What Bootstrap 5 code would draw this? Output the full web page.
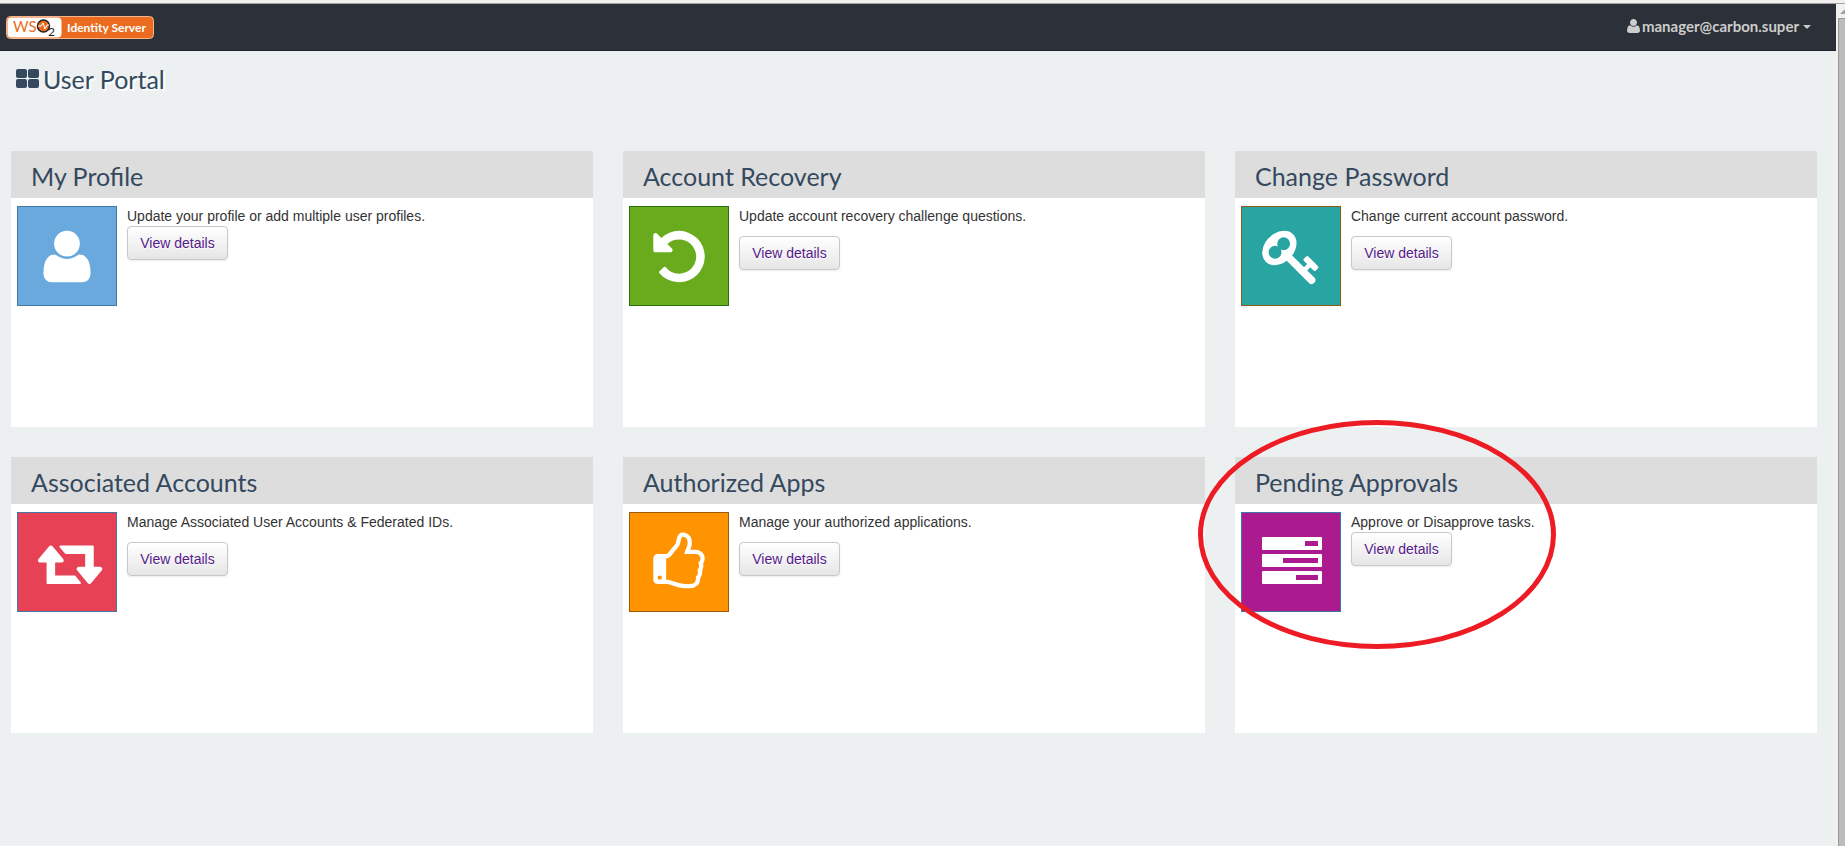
<!DOCTYPE html>
<html lang="en">
<head>
<meta charset="utf-8">
<meta name="viewport" content="width=device-width, initial-scale=1">
<title>WSO2 Identity Server - User Portal</title>
<link href="https://cdn.jsdelivr.net/npm/bootstrap@5.3.0/dist/css/bootstrap.min.css" rel="stylesheet">
<style>
  body { background: #ecf0f1; color: #333; font: 14px/20px "Liberation Sans", Arial, sans-serif; }
  .window-edge { height: 4px; background: #f2f0ee; border-bottom: 1px solid #a5a2a0; }
  .topbar { height: 47px; padding: 0 25px 0 6px; background: #2c3038; border-bottom: 1px solid #202428; }
  .logo { width: 148px; height: 23px; }
  .user-menu { --bs-btn-color: #ccc; --bs-btn-hover-color: #fff; --bs-btn-active-color: #fff; --bs-btn-padding-x: 0; --bs-btn-padding-y: 0; --bs-btn-border-width: 0;
    font: bold 15px/20px Lato, sans-serif; margin-bottom: 3px; }
  .user-menu svg { width: 13px; height: 14px; margin-right: 2px; }
  .user-menu::after { margin: 2px 0 0 4px; border-width: 4px 4px 0; }
  .portal { padding: 0 19px 30px 11px; }
  .portal-title { margin: 0; padding: 12px 0 0 5px; height: 100px; gap: 4px; font: 25px/32px Lato, sans-serif; color: #34495e; text-shadow: 2px 2px 1px #fff; }
  .portal-title svg { width: 23px; height: 20px; margin-top: 6px; }
  .tiles { --bs-gutter-x: 30px; --bs-gutter-y: 30px; }
  .panel { min-height: 276px; background: #fff; position: relative; }
  .panel-title { margin: 0; padding: 9px 20px 6px; font: 25px/32px Lato, sans-serif; color: #34495e; background: #ddd; }
  .panel-body { padding: 8px 6px; gap: 10px; }
  .details-gap { margin-bottom: 10px; }
  .tile { width: 100px; height: 100px; border: 1px solid #4178a4; color: #fff; }
  .blue { background: #6aa9dd; }
  .green { background: #6aab1e; border-color: #2b700f; }
  .teal { background: #28a5a3; border-color: #8f5a0c; }
  .red { background: #e64155; }
  .orange { background: #ff9400; border-color: #985b0c; }
  .purple { background: #ab1a8f; }
  .btn-details { --bs-btn-font-size: 14px; --bs-btn-line-height: 20px; --bs-btn-padding-x: 12px; --bs-btn-padding-y: 6px; --bs-btn-color: #551a8b; --bs-btn-hover-color: #551a8b; --bs-btn-border-radius: 4px;
    min-width: 101px; border-color: #c8c8c8; background: linear-gradient(#fff, #e6e6e6); text-shadow: 0 1px 1px #fff; box-shadow: 0 1px 2px rgba(0,0,0,.08); }
  .highlight { position: absolute; left: -37px; top: -37px; width: 358px; height: 229px; pointer-events: none; z-index: 2; }
  .scroll-rail { width: 9px; padding-left: 2px; background: #f2f1f0; }
  .scroll-rail svg { width: 7px; height: 14px; }
  .scroll-thumb { background: #bcbcbb; border-left: 1px solid #989796; border-top: 1px solid #989796; }
</style>
</head>
<body>
<div class="d-flex flex-column min-vh-100">
  <div class="window-edge"></div>
  <div class="d-flex flex-grow-1">
    <div class="flex-grow-1">
      <header class="topbar d-flex align-items-center justify-content-between">
        <a href="#" aria-label="WSO2 Identity Server" class="d-flex">
          <svg class="logo" viewBox="0 0 148 23">
            <rect x=".5" y=".5" width="147" height="22" rx="4" fill="#eb6c20" stroke="#f7b48c"/>
            <rect x="1.500" y="1.500" width="54" height="20" rx="4" fill="#fff"/>
            <text x="7" y="16" font-family="Lato, sans-serif" font-size="15" fill="#eb6c20">WS</text>
            <circle cx="37.500" cy="10" r="6" fill="#eb6c20" stroke="#222" stroke-width="1.500"/>
            <path d="M32 10h3l2-3 2 6 2-4h2" fill="none" stroke="#fff"/>
            <text x="42" y="20" font-family="Lato, sans-serif" font-size="12" fill="#222">2</text>
            <text x="61" y="16" font-family="Lato, sans-serif" font-size="12" font-weight="bold" fill="#fff">Identity Server</text>
          </svg>
        </a>
        <button type="button" class="btn user-menu dropdown-toggle d-flex align-items-center" data-bs-toggle="dropdown"><svg viewBox="0 -1408 1408 1536" fill="currentColor" aria-hidden="true"><use href="#i-user" transform="scale(1 -1)"/></svg>manager@carbon.super</button>
      </header>
      <main class="portal">
        <h1 class="portal-title d-flex">
          <svg viewBox="0 0 23 20" fill="currentColor" aria-hidden="true"><rect width="11" height="9" rx="2"/><rect x="12" width="11" height="9" rx="2"/><rect y="10" width="11" height="9" rx="2"/><rect x="12" y="10" width="11" height="9" rx="2"/></svg>
          User Portal
        </h1>
        <div class="row row-cols-1 row-cols-md-3 tiles">
          <div class="col"><section class="panel">
            <h2 class="panel-title">My Profile</h2>
            <div class="panel-body d-flex">
              <div class="tile blue flex-shrink-0"><svg class="d-block" viewBox="1 1 98 98" fill="currentColor" aria-hidden="true"><g transform="translate(26.400 72) scale(.0335 -.0335)"><path id="i-user" d="M1408 131q0-120-73-189.500t-194-69.500h-874q-121 0-194 69.500t-73 189.500q0 53 3.500 103.500t14 109t26.500 108.500t43 97.500t62 81t85.500 53.500t111.500 20q9 0 42-21.500t74.500-48t108-48t133.500-21.500t133.500 21.500t108 48t74.500 48t42 21.500q61 0 111.500-20t85.500-53.500t62-81t43-97.500t26.500-108.500t14-109t3.500-103.500zM1088 1024q0-159-112.500-271.500t-271.500-112.500t-271.500 112.500t-112.500 271.500t112.500 271.500t271.500 112.500t271.500-112.500t112.500-271.500z"/></g></svg></div>
              <div><p class="mb-0">Update your profile or add multiple user profiles.</p><a href="#" class="btn btn-details">View details</a></div>
            </div>
          </section></div>
          <div class="col"><section class="panel">
            <h2 class="panel-title">Account Recovery</h2>
            <div class="panel-body d-flex">
              <div class="tile green flex-shrink-0"><svg class="d-block" viewBox="1 1 98 98" fill="currentColor" aria-hidden="true"><path transform="translate(24.300 72) scale(.0335 -.0335)" d="M1536 640q0-156-61-298t-164-245t-245-164t-298-61q-172 0-327 72.500t-264 204.500q-7 10-6.500 22.500t8.500 20.500l137 138q10 9 25 9q16-2 23-12q73-95 179-147t225-52q104 0 198.500 40.500t163.500 109.500t109.500 163.500t40.500 198.500t-40.500 198.500t-109.500 163.500t-163.500 109.500t-198.500 40.500q-98 0-188-35.500t-160-101.500l137-138q31-30 14-69q-17-40-59-40h-448q-26 0-45 19t-19 45v448q0 42 40 59q39 17 69-14l130-129q107 101 244.500 156.500t284.500 55.500q156 0 298-61t245-164t164-245t61-298z"/></svg></div>
              <div><p class="details-gap">Update account recovery challenge questions.</p><a href="#" class="btn btn-details">View details</a></div>
            </div>
          </section></div>
          <div class="col"><section class="panel">
            <h2 class="panel-title">Change Password</h2>
            <div class="panel-body d-flex">
              <div class="tile teal flex-shrink-0"><svg class="d-block" viewBox="1 1 98 98" fill="currentColor" aria-hidden="true"><path transform="translate(21.200 72) scale(.0335 -.0335)" d="M832 1024q0 80-56 136t-136 56t-136-56t-56-136q0-42 19-83q-41 19-83 19q-80 0-136-56t-56-136t56-136t136-56t136 56t56 136q0 42-19 83q41-19 83-19q80 0 136 56t56 136zM1683 320q0-17-49-66t-66-49q-9 0-28.500 16t-36.500 33t-38.500 40t-24.500 26l-96-96l220-220q28-28 28-68q0-42-39-81t-81-39q-40 0-68 28l-671 671q-176-131-365-131q-163 0-265.500 102.500t-102.500 265.500q0 160 95 313t248 248t313 95q163 0 265.500-102.500t102.500-265.500q0-189-131-365l355-355l96 96q-3 3-26 24.500t-40 38.500t-33 36.500t-16 28.500q0 17 49 66t66 49q13 0 23-10q6-6 46-44.500t82-79.500t86.500-86t73-78t28.500-41z"/></svg></div>
              <div><p class="details-gap">Change current account password.</p><a href="#" class="btn btn-details">View details</a></div>
            </div>
          </section></div>
          <div class="col"><section class="panel">
            <h2 class="panel-title">Associated Accounts</h2>
            <div class="panel-body d-flex">
              <div class="tile red flex-shrink-0"><svg class="d-block" viewBox="1 1 98 98" fill="currentColor" aria-hidden="true"><path transform="translate(21 72) scale(.0335 -.0335)" d="M1280 32q0-13-9.500-22.500t-22.500-9.500h-960q-8 0-13.500 2t-9 7t-5.500 8t-3 11.500t-1 11.500v13v11v160v416h-192q-26 0-45 19t-19 45q0 24 15 41l320 384q19 22 49 22t49-22l320-384q15-17 15-41q0-26-19-45t-45-19h-192v-384h576q16 0 25-11l160-192q7-10 7-21zM1920 448q0-24-15-41l-320-384q-20-23-49-23t-49 23l-320 384q-15 17-15 41q0 26 19 45t45 19h192v384h-576q-16 0-25 12l-160 192q-7 9-7 20q0 13 9.500 22.500t22.500 9.500h960q8 0 13.500-2t9-7t5.500-8t3-11.500t1-11.500v-13v-11v-160v-416h192q26 0 45-19t19-45z"/></svg></div>
              <div><p class="details-gap">Manage Associated User Accounts &amp; Federated IDs.</p><a href="#" class="btn btn-details">View details</a></div>
            </div>
          </section></div>
          <div class="col"><section class="panel">
            <h2 class="panel-title">Authorized Apps</h2>
            <div class="panel-body d-flex">
              <div class="tile orange flex-shrink-0"><svg class="d-block" viewBox="1 1 98 98" fill="currentColor" aria-hidden="true"><path transform="translate(24.300 72) scale(.0335 -.0335)" d="M256 192q0 26-19 45t-45 19t-45-19t-19-45t19-45t45-19t45 19t19 45zM1408 768q0 51-39 89.500t-89 38.500h-352q0 58 48 159.500t48 160.500q0 98-32 145t-128 47q-26-26-38-85t-30.500-125.500t-59.500-109.500q-22-23-77-91q-4-5-23-30t-31.500-41t-34.500-42.500t-40-44t-38.500-35.500t-40-27t-35.500-9h-32v-640h32q13 0 31.500-3t33-6.500t38-11t35-11.500t35.500-12.500t29-10.500q211-73 342-73h121q192 0 192 167q0 26-5 56q30 16 47.500 52.500t17.500 73.500t-18 69q53 50 53 119q0 25-10 55.500t-25 47.500q32 1 53.500 47t21.500 81zM1536 769q0-89-49-163q9-33 9-69q0-77-38-144q3-21 3-43q0-101-60-178q1-139-85-219.500t-227-80.500h-36h-93q-96 0-189.500 22.500t-216.500 65.500q-116 40-138 40h-288q-53 0-90.500 37.500t-37.500 90.500v640q0 53 37.500 90.500t90.500 37.500h274q36 24 137 155q58 75 107 128q24 25 35.500 85.500t30.500 126.500t62 108q39 37 90 37q84 0 151-32.500t102-101.500t35-186q0-93-48-192h176q104 0 180-76t76-179z"/></svg></div>
              <div><p class="details-gap">Manage your authorized applications.</p><a href="#" class="btn btn-details">View details</a></div>
            </div>
          </section></div>
          <div class="col"><section class="panel">
            <h2 class="panel-title">Pending Approvals</h2>
            <div class="panel-body d-flex">
              <div class="tile purple flex-shrink-0"><svg class="d-block" viewBox="1 1 98 98" fill="currentColor" aria-hidden="true"><rect x="21" y="25" width="60" height="13" rx="1"/><rect x="21" y="42" width="60" height="13" rx="1"/><rect x="21" y="59" width="60" height="13" rx="1"/><path fill="#ab1a8f" d="M64 29h13v5H64zM42 46h35v5H42zM55 63h22v5H55z"/></svg></div>
              <div><p class="mb-0">Approve or Disapprove tasks.</p><a href="#" class="btn btn-details">View details</a></div>
            </div>
            <svg class="highlight" viewBox="0 0 358 229" aria-hidden="true"><ellipse cx="179" cy="114.500" rx="176.500" ry="112" fill="none" stroke="#ed1c24" stroke-width="5"/></svg>
          </section></div>
        </div>
      </main>
    </div>
    <div class="scroll-rail d-flex flex-column flex-shrink-0" aria-hidden="true">
      <svg viewBox="0 0 7 14" fill="#a09f9e"><path d="M2 10l4.500-4.500L7 6v4z"/></svg>
      <div class="scroll-thumb flex-grow-1"></div>
    </div>
  </div>
</div>
<script src="https://cdn.jsdelivr.net/npm/bootstrap@5.3.0/dist/js/bootstrap.bundle.min.js"></script>
</body>
</html>
